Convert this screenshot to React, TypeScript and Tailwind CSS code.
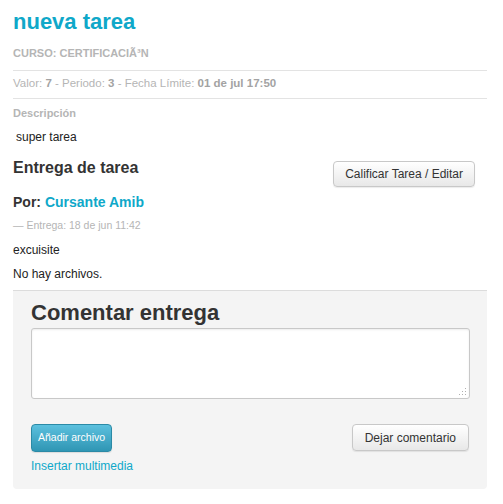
export default function App() {
  return (
    <div className="min-h-[504px] bg-white px-[13px] pt-[8px] text-[12px] text-[#333] [font-family:'Liberation_Sans',Arial,sans-serif]">
      <div className="w-[474px]">
        <h1 className="text-[22px] font-bold leading-[28px] text-[#0fa8c9]">nueva tarea</h1>
        <p className="mt-[10px] text-[11px] font-bold leading-[14px] text-[#b5b5b5]">CURSO: CERTIFICACIÃ³N</p>
        <div className="mt-[10px] border-t border-[#e3e3e3]" />
        <p className="mt-[4px] text-[11.5px] leading-[16px] text-[#b5b5b5]">
          Valor: <b className="text-[#a3a3a3]">7</b> - Periodo: <b className="text-[#a3a3a3]">3</b> - Fecha Límite:{" "}
          <b className="text-[#a3a3a3]">01 de jul 17:50</b>
        </p>
        <div className="mt-[7px] border-t border-[#e3e3e3]" />
        <p className="mt-[7px] text-[11px] font-bold leading-[14px] text-[#b5b5b5]">Descripción</p>
        <p className="mt-[9px] pl-[3px] text-[12px] leading-[16px] text-[#222]">super tarea</p>
        <div className="mt-[13px] flex items-start justify-between">
          <h2 className="text-[16px] font-bold leading-[20px] text-[#333]">Entrega de tarea</h2>
          <button className="mr-[12px] mt-[3px] h-[26px] rounded-[4px] border border-[#c8c8c8] bg-gradient-to-b from-white to-[#e8e8e8] px-[11px] text-[12px] text-[#333] shadow-[0_1px_1px_rgba(0,0,0,0.08)]">
            Calificar Tarea / Editar
          </button>
        </div>
        <h3 className="mt-[6px] text-[14px] font-bold leading-[18px] text-[#333]">
          Por: <span className="text-[#0fa8c9]">Cursante Amib</span>
        </h3>
        <p className="mt-[7px] text-[10.5px] leading-[14px] text-[#b5b5b5]">— Entrega: 18 de jun 11:42</p>
        <p className="mt-[10px] text-[12px] leading-[16px] text-[#222]">excuisite</p>
        <p className="mt-[8px] text-[12px] leading-[16px] text-[#222]">No hay archivos.</p>
        <div className="mt-[8px] rounded-b-[4px] border-t border-[#dcdcdc] bg-[#f4f4f4] px-[18px] pb-[15px] pt-[9px]">
          <h2 className="text-[22px] font-bold leading-[26px] text-[#333]">Comentar entrega</h2>
          <div className="relative mt-[2px] w-[439px]">
            <textarea className="block h-[71px] w-full resize-none rounded-[3px] border border-[#c8c8c8] bg-white shadow-[inset_0_1px_2px_rgba(0,0,0,0.08)]" />
            <svg className="absolute bottom-[3px] right-[3px]" width="8" height="8" viewBox="0 0 8 8">
              <g fill="#b0b0b0">
                <rect x="6" y="0" width="1" height="1" />
                <rect x="3" y="3" width="1" height="1" />
                <rect x="6" y="3" width="1" height="1" />
                <rect x="0" y="6" width="1" height="1" />
                <rect x="3" y="6" width="1" height="1" />
                <rect x="6" y="6" width="1" height="1" />
              </g>
            </svg>
          </div>
          <div className="mt-[25px] flex items-start justify-between">
            <div>
              <button className="h-[28px] rounded-[4px] border border-[#2b8aa6] bg-gradient-to-b from-[#5bc0de] to-[#2f96b4] px-[6px] text-[10.5px] text-white shadow-[0_1px_1px_rgba(0,0,0,0.1)]">
                Añadir archivo
              </button>
              <p className="mt-[6px] text-[12px] leading-[16px] text-[#0fa8c9]">Insertar multimedia</p>
            </div>
            <button className="h-[27px] rounded-[4px] border border-[#c8c8c8] bg-gradient-to-b from-white to-[#e8e8e8] px-[12px] text-[12px] text-[#333] shadow-[0_1px_1px_rgba(0,0,0,0.08)]">
              Dejar comentario
            </button>
          </div>
        </div>
      </div>
    </div>
  );
}
